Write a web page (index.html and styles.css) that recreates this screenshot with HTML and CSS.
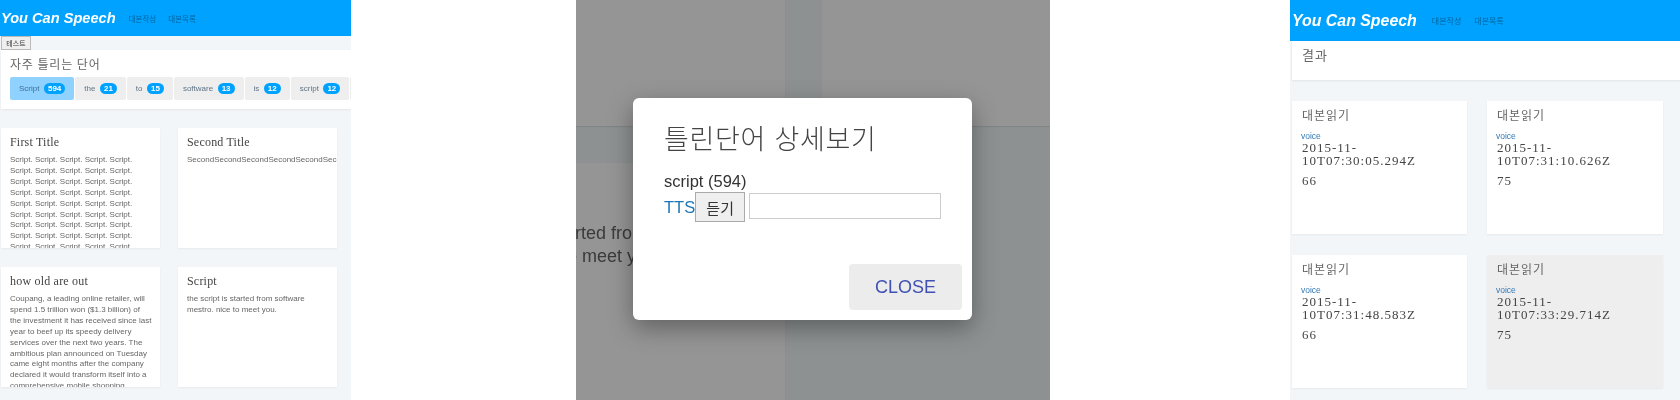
FILE: index.html
```html
<!DOCTYPE html>
<html lang="ko">
<head>
    <meta charset="UTF-8">
    <title>You Can Speech</title>
    <link rel="stylesheet" href="styles.css">
</head>
<body>
    <div class="panel panel-main">
        <header class="topbar">
            <span class="brand">You Can Speech</span>
            <nav class="nav"><a>대본작성</a><a>대본목록</a></nav>
        </header>
        <button class="test-btn">테스트</button>
        <section class="words">
            <h4 class="words-title">자주 틀리는 단어</h4>
            <div class="tabs">
                <div class="tab active">Script <span class="badge">594</span></div>
                <div class="tab">the <span class="badge">21</span></div>
                <div class="tab">to <span class="badge">15</span></div>
                <div class="tab">software <span class="badge">13</span></div>
                <div class="tab">is <span class="badge">12</span></div>
                <div class="tab">script <span class="badge">12</span></div>
                <div class="tab"></div>
            </div>
        </section>
        <div class="script-grid">
            <article class="script-card">
                <h5>First Title</h5>
                <p>Script. Script. Script. Script. Script. Script. Script. Script. Script. Script. Script. Script. Script. Script. Script. Script. Script. Script. Script. Script. Script. Script. Script. Script. Script. Script. Script. Script. Script. Script. Script. Script. Script. Script. Script. Script. Script. Script. Script. Script. Script. Script. Script. Script. Script. Script. Script. Script. Script. Script.</p>
            </article>
            <article class="script-card">
                <h5>Second Title</h5>
                <p class="nowrap">SecondSecondSecondSecondSecondSecondSecond</p>
            </article>
            <article class="script-card">
                <h5>how old are out</h5>
                <p>Coupang, a leading online retailer, will spend 1.5 trillion won ($1.3 billion) of the investment it has received since last year to beef up its speedy delivery services over the next two years. The ambitious plan announced on Tuesday came eight months after the company declared it would transform itself into a comprehensive mobile shopping platform.</p>
            </article>
            <article class="script-card">
                <h5>Script</h5>
                <p>the script is started from software mestro. nice to meet you.</p>
            </article>
        </div>
    </div>

    <div class="panel panel-modal">
        <div class="backdrop-page">
            <div class="page-card"></div>
            <div class="page-gutter"></div>
            <div class="page-card"></div>
            <div class="page-row"></div>
            <div class="page-card page-text"><p>started from software</p><p>nice to meet you.</p></div>
        </div>
        <div class="dim"></div>
        <div class="modal">
            <h3 class="modal-title">틀린단어 상세보기</h3>
            <div class="modal-word">script (594)</div>
            <div class="modal-row">
                <a class="tts">TTS</a><button class="listen-btn">듣기</button><input class="answer" type="text">
            </div>
            <div class="modal-footer"><a class="close-btn">CLOSE</a></div>
        </div>
    </div>

    <div class="panel panel-result">
        <header class="topbar topbar-tall">
            <span class="brand">You Can Speech</span>
            <nav class="nav"><a>대본작성</a><a>대본목록</a></nav>
        </header>
        <section class="result-head">결과</section>
        <div class="result-grid">
            <article class="result-card">
                <h5>대본읽기</h5>
                <a class="voice">voice</a>
                <div class="stamp">2015-11-<br>10T07:30:05.294Z</div>
                <div class="score">66</div>
            </article>
            <article class="result-card">
                <h5>대본읽기</h5>
                <a class="voice">voice</a>
                <div class="stamp">2015-11-<br>10T07:31:10.626Z</div>
                <div class="score">75</div>
            </article>
            <article class="result-card">
                <h5>대본읽기</h5>
                <a class="voice">voice</a>
                <div class="stamp">2015-11-<br>10T07:31:48.583Z</div>
                <div class="score">66</div>
            </article>
            <article class="result-card selected">
                <h5>대본읽기</h5>
                <a class="voice">voice</a>
                <div class="stamp">2015-11-<br>10T07:33:29.714Z</div>
                <div class="score">75</div>
            </article>
        </div>
    </div>
</body>
</html>
```

FILE: styles.css
```css
html, body {
    height: 400px;
    overflow: hidden;
}
body {
    margin: 0;
    display: flex;
    background-color: #ffffff;
    font-family: "Liberation Sans", "Noto Sans CJK KR", sans-serif;
    color: #444;
}
h3, h4, h5, p {
    margin: 0;
    font-weight: normal;
}
.panel {
    height: 400px;
    overflow: hidden;
    flex: none;
    background-color: #f3f6f9;
    filter: blur(0.35px);
}
.panel-main {
    width: 351px;
}
.panel-modal {
    width: 474px;
    margin-left: 225px;
    position: relative;
}
.panel-result {
    width: 390px;
    margin-left: 240px;
}

/* top bar */
.topbar {
    height: 36px;
    background-color: #00a2ff;
    display: flex;
    align-items: center;
    padding-left: 1px;
}
.topbar-tall {
    height: 41px;
    padding-left: 2px;
}
.brand {
    font-size: 14.6px;
    font-weight: bold;
    font-style: italic;
    color: #fff;
}
.nav {
    display: flex;
    gap: 12px;
    margin-left: 13px;
    font-size: 7.5px;
    color: rgba(0, 0, 0, 0.4);
}
.topbar-tall .brand {
    font-size: 15.9px;
}
.topbar-tall .nav {
    margin-left: 15px;
    font-size: 8px;
    gap: 13px;
}

.test-btn {
    display: block;
    width: 30px;
    height: 14px;
    margin-left: 1px;
    padding: 0;
    border: 1px solid #bbb;
    background-color: #efefef;
    font-family: inherit;
    font-size: 7px;
    color: #333;
}

/* frequent words */
.words {
    margin-left: 1px;
    height: 59px;
    box-sizing: border-box;
    padding: 5px 0 0 9px;
    background-color: #fff;
    box-shadow: 0 1px 2px rgba(0, 0, 0, 0.06);
    overflow: hidden;
}
.words-title {
    font-family: "Liberation Serif", "Noto Sans CJK KR", serif;
    font-size: 12px;
    line-height: 20px;
    letter-spacing: 0.8px;
    color: #666;
}
.tabs {
    display: flex;
    gap: 1px;
    margin-top: 2px;
    white-space: nowrap;
}
.tab {
    flex: none;
    height: 23px;
    min-width: 20px;
    box-sizing: border-box;
    display: flex;
    align-items: center;
    justify-content: center;
    gap: 4.5px;
    padding: 0 9px;
    border-radius: 2px;
    background-color: #eee;
    font-size: 8px;
    color: #5f7486;
}
.tab.active {
    background-color: #8fd2ff;
    color: #3f6f96;
}
.badge {
    height: 11px;
    padding: 0 4px;
    border-radius: 6px;
    background-color: #00a2ff;
    color: #fff;
    font-size: 8px;
    font-weight: bold;
    line-height: 11px;
    text-align: center;
}

/* script cards */
.script-grid {
    display: grid;
    grid-template-columns: 159px 159px;
    grid-auto-rows: 120px;
    column-gap: 18px;
    row-gap: 19px;
    margin: 19px 0 0 1px;
}
.script-card {
    background-color: #fff;
    padding: 7px 8px 0 9px;
    overflow: hidden;
    box-shadow: 0 1px 2px rgba(0, 0, 0, 0.05);
}
.script-card h5 {
    font-family: "Liberation Serif", serif;
    font-size: 12px;
    line-height: 14px;
    letter-spacing: 0.2px;
    color: #444;
    margin-bottom: 6px;
}
.script-card p {
    font-size: 8px;
    line-height: 10.9px;
    color: #666;
}
.script-card p.nowrap {
    white-space: nowrap;
}

/* modal page */
.backdrop-page {
    display: grid;
    grid-template-columns: 209px 37px 228px;
    grid-template-rows: 126px 37px 237px;
    height: 400px;
    background-color: #f1f8f8;
}
.page-card {
    background-color: #fff;
    overflow: hidden;
    box-shadow: 0 1px 1px rgba(0, 0, 0, 0.08);
}
.page-row {
    grid-column: 1 / 4;
}
.page-text {
    padding-top: 59px;
    font-size: 18px;
    line-height: 23px;
    color: #666;
    white-space: nowrap;
}
.page-text p {
    margin-left: -25px;
}
.page-text p + p {
    margin-left: -52px;
}
.dim {
    position: absolute;
    inset: 0;
    background-color: rgba(0, 0, 0, 0.415);
}
.modal {
    position: absolute;
    left: 57px;
    top: 98px;
    width: 339px;
    height: 222px;
    box-sizing: border-box;
    padding: 21px 10px 0 31px;
    border-radius: 6px;
    background-color: #fff;
    box-shadow: 0 8px 24px rgba(0, 0, 0, 0.35);
}
.modal-title {
    font-family: "Noto Sans CJK KR", "Liberation Serif", serif;
    font-weight: 300;
    font-size: 27px;
    line-height: 38px;
    letter-spacing: 0.7px;
    color: #444;
}
.modal-word {
    margin-top: 15px;
    font-size: 16.5px;
    line-height: 19px;
    color: #333;
}
.modal-row {
    display: flex;
    align-items: flex-start;
    margin-top: 1px;
}
.tts {
    font-size: 16.5px;
    line-height: 30px;
    color: #1a76b8;
}
.listen-btn {
    width: 50px;
    height: 30px;
    padding: 0;
    border: 1px solid #aaa;
    background-color: #efefef;
    font-family: inherit;
    font-size: 15px;
    color: #333;
}
.answer {
    width: 192px;
    height: 26px;
    box-sizing: border-box;
    margin: 1px 0 0 4px;
    border: 1px solid #ccc;
    background-color: #fff;
}
.modal-footer {
    display: flex;
    justify-content: flex-end;
    margin-top: 42px;
}
.close-btn {
    width: 113px;
    height: 46px;
    border-radius: 4px;
    background-color: #ececec;
    color: #3f51b5;
    font-size: 18px;
    line-height: 46px;
    text-align: center;
}

/* result panel */
.result-head {
    height: 39px;
    box-sizing: border-box;
    margin-left: 2px;
    padding: 5px 0 0 10px;
    background-color: #fff;
    box-shadow: 0 1px 2px rgba(0, 0, 0, 0.08);
    font-family: "Liberation Serif", "Noto Sans CJK KR", serif;
    font-size: 13px;
    letter-spacing: 1px;
    line-height: 20px;
    color: #666;
}
.result-grid {
    display: grid;
    grid-template-columns: 175px 176px;
    grid-auto-rows: 133px;
    column-gap: 20px;
    row-gap: 21px;
    margin: 21px 0 0 2px;
}
.result-card {
    background-color: #fff;
    padding: 5px 0 0 10px;
    overflow: hidden;
    box-shadow: 0 1px 2px rgba(0, 0, 0, 0.05);
}
.result-card.selected {
    background-color: #eeeeee;
}
.result-card h5 {
    font-family: "Liberation Serif", "Noto Sans CJK KR", serif;
    font-size: 12px;
    letter-spacing: 1px;
    line-height: 20px;
    color: #666;
    margin-bottom: 5px;
}
.voice {
    display: block;
    margin-left: -1px;
    font-size: 8.5px;
    line-height: 10px;
    color: #337ab7;
}
.stamp, .score {
    font-family: "Liberation Serif", serif;
    font-size: 13px;
    letter-spacing: 1px;
    line-height: 13px;
    color: #444;
}
.score {
    margin-top: 7px;
}
```
